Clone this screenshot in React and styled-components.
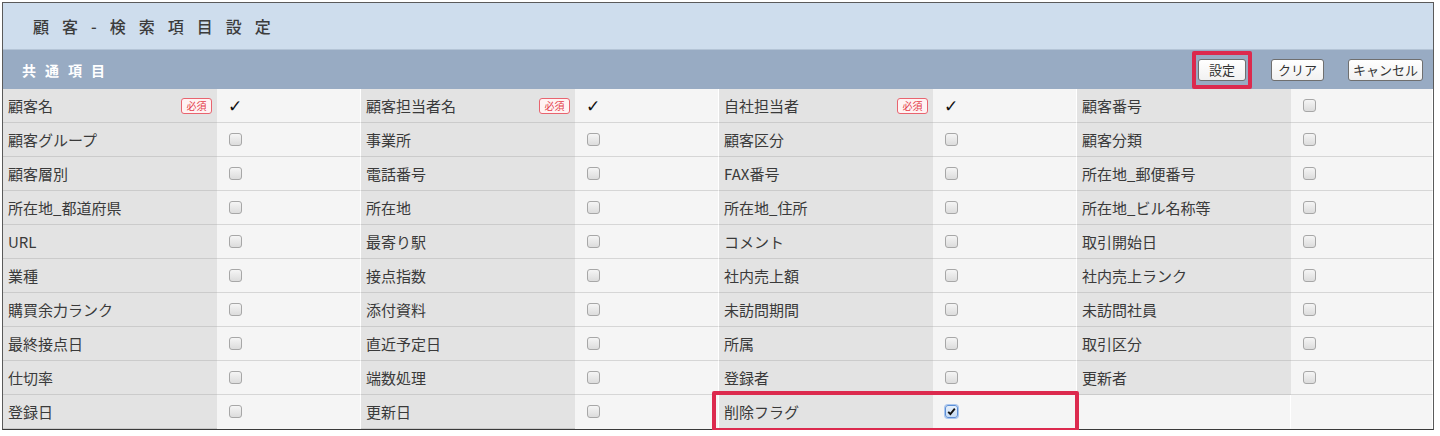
import React from 'react';
import styled, { createGlobalStyle } from 'styled-components';

const GlobalStyle = createGlobalStyle`
  html, body { margin: 0; padding: 0; background: #ffffff; }
  body { font-family: "Noto Sans CJK JP", "Noto Sans", sans-serif; color: #333; }
`;

const ROWS = [
  [['顧客名', 'req'], ['顧客担当者名', 'req'], ['自社担当者', 'req'], ['顧客番号', 'off']],
  [['顧客グループ', 'off'], ['事業所', 'off'], ['顧客区分', 'off'], ['顧客分類', 'off']],
  [['顧客層別', 'off'], ['電話番号', 'off'], ['FAX番号', 'off'], ['所在地_郵便番号', 'off']],
  [['所在地_都道府県', 'off'], ['所在地', 'off'], ['所在地_住所', 'off'], ['所在地_ビル名称等', 'off']],
  [['URL', 'off'], ['最寄り駅', 'off'], ['コメント', 'off'], ['取引開始日', 'off']],
  [['業種', 'off'], ['接点指数', 'off'], ['社内売上額', 'off'], ['社内売上ランク', 'off']],
  [['購買余力ランク', 'off'], ['添付資料', 'off'], ['未訪問期間', 'off'], ['未訪問社員', 'off']],
  [['最終接点日', 'off'], ['直近予定日', 'off'], ['所属', 'off'], ['取引区分', 'off']],
  [['仕切率', 'off'], ['端数処理', 'off'], ['登録者', 'off'], ['更新者', 'off']],
  [['登録日', 'off'], ['更新日', 'off'], ['削除フラグ', 'on', true], null],
];

const Frame = styled.div`
  margin: 2px 0 0 2px;
  width: 1430px;
  border: 1px solid #5a5a5a;
  border-bottom-color: #3a3a3a;
`;

const TitleBar = styled.div`
  height: 46px;
  background: #cedded;
  display: flex;
  align-items: center;
  padding-left: 30px;
  border-bottom: 1px solid #b4c4d6;
`;

const Title = styled.h1`
  margin: 0;
  font-size: 16px;
  font-weight: 500;
  letter-spacing: 13px;
  color: #3c3c3c;
`;

const SectionBar = styled.div`
  height: 39px;
  background: #98abc3;
  display: flex;
  align-items: center;
  justify-content: space-between;
  padding: 0 10px 0 19px;
`;

const SectionTitle = styled.h2`
  margin: 0;
  font-size: 14px;
  font-weight: 700;
  letter-spacing: 9px;
  color: #ffffff;
`;

const Actions = styled.div`
  display: flex;
  align-items: center;
  gap: 24px;
`;

const Highlight = styled.div`
  display: flex;
  border: 4px solid #dc2a4e;
  border-radius: 2px;
  padding: 4px 2px;
  margin-right: -5px;
`;

const Button = styled.button`
  height: 22px;
  width: ${(p) => p.$w}px;
  padding: 0;
  border: 1px solid #6f6f6f;
  border-radius: 3px;
  background: linear-gradient(180deg, #ffffff 0%, #f1f1f1 100%);
  font-family: "Noto Sans CJK JP", sans-serif;
  font-size: 13px;
  color: #333;
  line-height: 20px;
  cursor: pointer;
`;

const Grid = styled.div`
  display: grid;
  grid-template-columns: 214px 144px 214px 144px 214px 144px 214px 142px;
  grid-auto-rows: 34px;
`;

const LabelCell = styled.div`
  position: relative;
  display: flex;
  align-items: center;
  justify-content: space-between;
  padding: 0 5px 0 5px;
  background: #e3e3e3;
  border-bottom: 1px solid #cbcbcb;
  font-size: 15px;
  color: #3a3a3a;
  white-space: nowrap;
`;

const ValueCell = styled.div`
  display: flex;
  align-items: center;
  padding-left: 12px;
  background: #f5f5f5;
  border-bottom: 1px solid ${(p) => (p.$last ? '#f5f5f5' : '#d6d6d6')};
  border-right: 1px solid #ffffff;
`;

const Required = styled.span`
  display: inline-flex;
  align-items: center;
  justify-content: center;
  width: 29px;
  height: 14px;
  border: 1px solid #e8646f;
  border-radius: 3px;
  background: #fff3f3;
  color: #e33d4a;
  font-size: 10px;
  line-height: 1;
`;

const Tick = styled.span`
  font-family: "DejaVu Sans", sans-serif;
  font-size: 17px;
  color: #111;
  font-weight: 700;
  margin-left: -1px;
`;

const Box = styled.span`
  display: inline-flex;
  align-items: center;
  justify-content: center;
  width: 11px;
  height: 11px;
  border: 1px solid ${(p) => (p.$on ? '#5d8fd6' : '#a7a7a7')};
  border-radius: 3px;
  background: ${(p) =>
    p.$on ? 'linear-gradient(180deg, #e6f0fb, #c9dcf3)' : 'linear-gradient(180deg, #f5f5f5, #dcdcdc)'};
  box-shadow: ${(p) => (p.$on ? '0 0 0 1px #a9c6ee' : 'none')};
`;

const RowMark = styled.span`
  position: absolute;
  left: -7px;
  top: -4px;
  bottom: -4px;
  width: 367px;
  box-sizing: border-box;
  border: 4px solid #dc2a4e;
  border-radius: 2px;
  pointer-events: none;
  z-index: 1;
`;

function Check({ state }) {
  if (state === 'req') return <Tick>✓</Tick>;
  return (
    <Box $on={state === 'on'}>
      {state === 'on' && (
        <svg width="9" height="9" viewBox="0 0 9 9">
          <path d="M1.2 4.8 L3.4 7 L7.8 1.6" fill="none" stroke="#111" strokeWidth="1.9" />
        </svg>
      )}
    </Box>
  );
}

export default function App() {
  return (
    <>
      <GlobalStyle />
      <Frame>
        <TitleBar>
          <Title>顧客-検索項目設定</Title>
        </TitleBar>
        <SectionBar>
          <SectionTitle>共通項目</SectionTitle>
          <Actions>
            <Highlight>
              <Button $w={48}>設定</Button>
            </Highlight>
            <Button $w={53}>クリア</Button>
            <Button $w={75}>キャンセル</Button>
          </Actions>
        </SectionBar>
        <Grid>
          {ROWS.map((row, ri) =>
            row.map((item, ci) =>
              item ? (
                <React.Fragment key={`${ri}-${ci}`}>
                  <LabelCell>
                    <span>{item[0]}</span>
                    {item[1] === 'req' && <Required>必須</Required>}
                    {item[2] && <RowMark />}
                  </LabelCell>
                  <ValueCell $last={ri === ROWS.length - 1}>
                    <Check state={item[1]} />
                  </ValueCell>
                </React.Fragment>
              ) : (
                <React.Fragment key={`${ri}-${ci}`}>
                  <ValueCell $last />
                  <ValueCell $last />
                </React.Fragment>
              )
            )
          )}
        </Grid>
      </Frame>
    </>
  );
}
